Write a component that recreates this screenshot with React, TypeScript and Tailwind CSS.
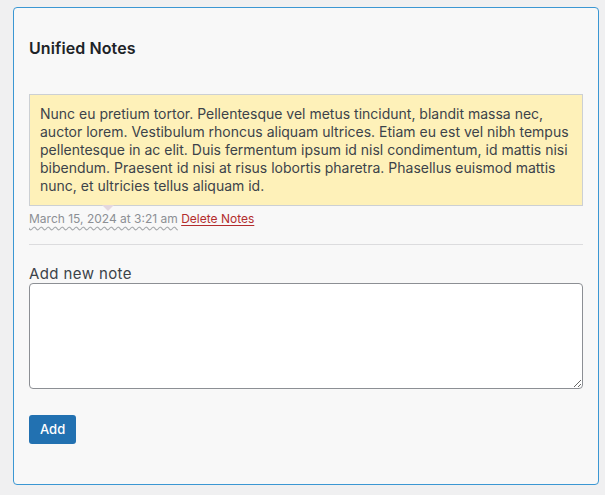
export default function App() {
  return (
    <div className="min-h-[495px] bg-[#f0f0f1] pt-[7px] pl-[13px] pr-[6px] font-['Inter',sans-serif] text-[#3c434a]">
      <div className="h-[478px] rounded-[4px] border border-[#3b97d3] bg-[#f8f8f8] px-[15px]">
        {/* Header */}
        <h2 className="mt-[30px] text-[16px] font-semibold leading-[20px] tracking-[0.1px] text-[#1d2327]">Unified Notes</h2>

        {/* Note */}
        <div className="mt-[36px]">
          <div className="relative border border-[#ccd0d4] bg-[#fef1b9] px-[10px] py-[10px] text-[14px] leading-[18px] text-[#3c434a]">
            Nunc eu pretium tortor. Pellentesque vel metus tincidunt, blandit massa nec, auctor lorem. Vestibulum rhoncus aliquam ultrices. Etiam eu est vel nibh tempus pellentesque in ac elit. Duis fermentum ipsum id nisl condimentum, id mattis nisi bibendum. Praesent id nisi at risus lobortis pharetra. Phasellus euismod mattis nunc, et ultricies tellus aliquam id.
            <span className="absolute left-[72px] top-full h-0 w-0 border-x-[6px] border-t-[6px] border-x-transparent border-t-[#e3d7df]" />
          </div>
          <div className="mt-[4px] text-[12px] leading-[18px]">
            <abbr className="text-[#8c8f94] underline decoration-wavy decoration-[#a7aaad] underline-offset-[3px]">March 15, 2024 at 3:21 am</abbr>{" "}
            <a className="text-[#b32d2e] underline underline-offset-2" href="#">Delete Notes</a>
          </div>
        </div>

        <hr className="mt-[16px] border-t border-[#dcdcde]" />

        {/* New note */}
        <label className="mt-[19px] block text-[15px] leading-[19px] tracking-[0.4px] text-[#3c434a]">Add new note</label>
        <textarea className="block h-[106px] w-full rounded-[4px] border border-[#8c8f94] bg-white" />

        <button className="mt-[26px] h-[29px] rounded-[3px] bg-[#2271b1] px-[11px] text-[13px] font-medium text-white">Add</button>
      </div>
    </div>
  );
}
